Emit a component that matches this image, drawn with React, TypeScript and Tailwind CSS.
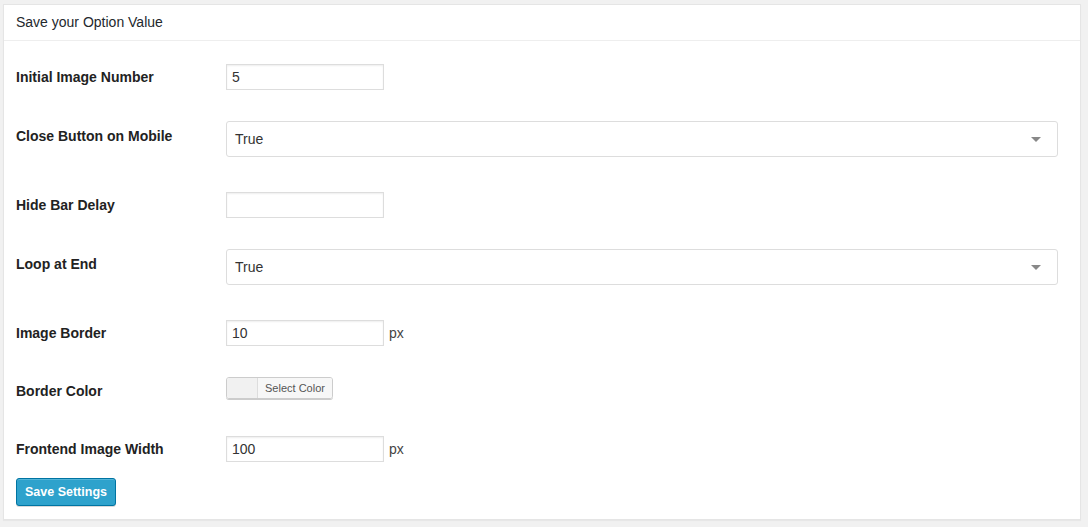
import React from "react";

const font = { fontFamily: '"Liberation Sans", Arial, sans-serif' };

const TextInput: React.FC<{ value: string; px?: boolean }> = ({ value, px }) => (
  <div className="flex items-center">
    <div className="w-[158px] h-[26px] border border-[#ddd] bg-white shadow-[inset_0_1px_2px_rgba(0,0,0,0.07)] px-[5px] text-[14px] leading-[24px] text-[#333]">
      {value}
    </div>
    {px && <span className="ml-[5px] text-[14px] text-[#444]">px</span>}
  </div>
);

const SelectBox: React.FC<{ value: string }> = ({ value }) => (
  <div className="flex-1 h-[36px] border border-[#ddd] rounded-[3px] bg-white flex items-center justify-between pl-[8px] pr-[16px] text-[14px] text-[#333]">
    <span>{value}</span>
    <span className="w-0 h-0 border-l-[5px] border-r-[5px] border-t-[5px] border-l-transparent border-r-transparent border-t-[#888]" />
  </div>
);

const Row: React.FC<{ label: string; mt: string; lt: string; children: React.ReactNode }> = ({ label, mt, lt, children }) => (
  <div className={`flex items-start ${mt}`}>
    <div className={`w-[210px] shrink-0 ${lt} text-[14px] leading-[17px] font-bold text-[#222]`}>{label}</div>
    <div className="flex-1 flex">{children}</div>
  </div>
);

export default function App() {
  return (
    <div className="min-h-[527px] bg-[#f1f1f1] pt-[4px] pl-[3px] pr-[7px]" style={font}>
      <div className="bg-white border border-[#e5e5e5] shadow-[0_1px_1px_rgba(0,0,0,0.04)]">
        <div className="h-[36px] border-b border-[#eee] px-[12px] flex items-center text-[14px] text-[#23282d]">
          Save your Option Value
        </div>
        <div className="pl-[12px] pr-[22px] pb-[13px]">
          <Row label="Initial Image Number" mt="mt-[23px]" lt="mt-[5px]">
            <TextInput value="5" />
          </Row>
          <Row label="Close Button on Mobile" mt="mt-[31px]" lt="mt-[7px]">
            <SelectBox value="True" />
          </Row>
          <Row label="Hide Bar Delay" mt="mt-[35px]" lt="mt-[5px]">
            <TextInput value="" />
          </Row>
          <Row label="Loop at End" mt="mt-[31px]" lt="mt-[7px]">
            <SelectBox value="True" />
          </Row>
          <Row label="Image Border" mt="mt-[35px]" lt="mt-[5px]">
            <TextInput value="10" px />
          </Row>
          <Row label="Border Color" mt="mt-[31px]" lt="mt-[6px]">
            <div className="flex h-[22px] border border-[#ccc] rounded-[3px] overflow-hidden shadow-[0_1px_0_#ccc]">
              <div className="w-[31px] bg-[#f1f1f1] border-r border-[#ddd]" />
              <div className="px-[7px] bg-[#f7f7f7] text-[11px] leading-[20px] text-[#555]">Select Color</div>
            </div>
          </Row>
          <Row label="Frontend Image Width" mt="mt-[36px]" lt="mt-[5px]">
            <TextInput value="100" px />
          </Row>
          <button className="mt-[16px] w-[100px] h-[28px] rounded-[3px] bg-[#2ea2cc] border border-[#0074a2] text-white text-[12.5px] font-bold shadow-[inset_0_1px_0_rgba(120,200,230,0.5),0_1px_0_rgba(0,0,0,0.15)]">
            Save Settings
          </button>
        </div>
      </div>
    </div>
  );
}
